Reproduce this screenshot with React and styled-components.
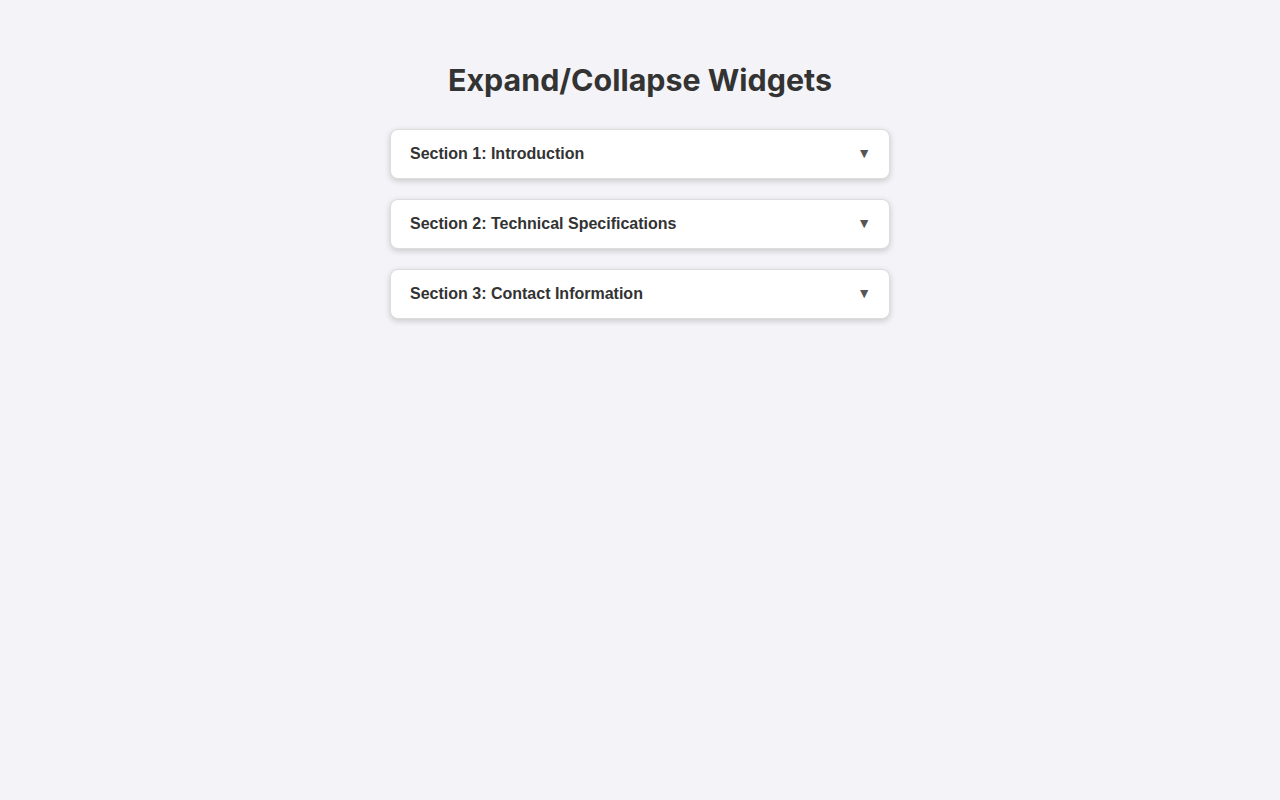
import React, { useState } from 'react';
import styled, { createGlobalStyle } from 'styled-components';

const GlobalStyle = createGlobalStyle`
  html, body {
    margin: 0;
    padding: 0;
    background: #f4f4f8;
  }
  body {
    font-family: "Liberation Sans", Arial, sans-serif;
    color: #333;
  }
`;

const Page = styled.div`
  min-height: 800px;
  padding: 40px 20px;
  box-sizing: border-box;
  display: flex;
  flex-direction: column;
  align-items: center;
`;

const Title = styled.h1`
  margin: 22px 0 30px;
  font-family: Inter, "Liberation Sans", sans-serif;
  font-size: 30.4px;
  line-height: 37px;
  font-weight: 700;
  color: #333;
  text-align: center;
`;

const List = styled.div`
  width: 500px;
  display: flex;
  flex-direction: column;
  gap: 20px;
`;

const Card = styled.div`
  background: #fff;
  border: 1px solid #ddd;
  border-radius: 8px;
  box-shadow: 0 2px 6px rgba(0, 0, 0, 0.18);
  overflow: hidden;
`;

const Header = styled.button`
  width: 100%;
  display: flex;
  align-items: center;
  justify-content: space-between;
  padding: 15px 18px 15px 19px;
  border: none;
  background: transparent;
  font-family: "Liberation Sans", Arial, sans-serif;
  font-size: 16px;
  font-weight: 700;
  color: #333;
  line-height: 18px;
  cursor: pointer;
  text-align: left;
`;

const Arrow = styled.span`
  font-size: 14px;
  color: #555;
  margin-top: -2px;
  transform: rotate(${(p) => (p.$open ? '180deg' : '0deg')});
  transition: transform 0.2s;
`;

const Body = styled.div`
  padding: 0 20px 15px;
  font-size: 14px;
  line-height: 1.5;
  color: #555;
`;

const sections = [
  { title: 'Section 1: Introduction', text: 'An overview of what this page covers.' },
  { title: 'Section 2: Technical Specifications', text: 'Details about dimensions, materials and performance.' },
  { title: 'Section 3: Contact Information', text: 'Reach us by email or phone during business hours.' },
];

export default function App() {
  const [open, setOpen] = useState(null);
  return (
    <>
      <GlobalStyle />
      <Page>
        <Title>Expand/Collapse Widgets</Title>
        <List>
          {sections.map((s, i) => (
            <Card key={s.title}>
              <Header onClick={() => setOpen(open === i ? null : i)}>
                {s.title}
                <Arrow $open={open === i}>▼</Arrow>
              </Header>
              {open === i && <Body>{s.text}</Body>}
            </Card>
          ))}
        </List>
      </Page>
    </>
  );
}
